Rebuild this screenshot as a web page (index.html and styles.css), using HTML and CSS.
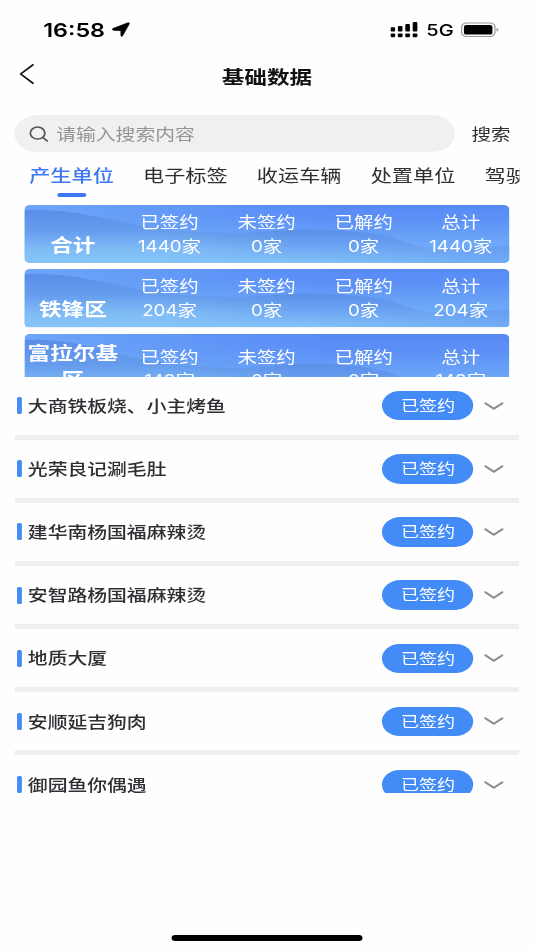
FILE: index.html
```html
<!DOCTYPE html>
<html lang="zh-CN">
<head>
<meta charset="utf-8">
<title>基础数据</title>
<link rel="stylesheet" href="styles.css">
</head>
<body>
<svg width="0" height="0" class="defs">
  <defs>
    <linearGradient id="w1" gradientUnits="userSpaceOnUse" x1="0" y1="4" x2="0" y2="58"><stop offset="0" stop-color="#5b8de8"/><stop offset=".4" stop-color="#669ced"/><stop offset=".75" stop-color="#80bcf6"/><stop offset="1" stop-color="#86c4f8"/></linearGradient>
    <linearGradient id="w2" gradientUnits="userSpaceOnUse" x1="0" y1="22" x2="0" y2="58"><stop offset="0" stop-color="#588ae6"/><stop offset=".5" stop-color="#6ca3f1"/><stop offset="1" stop-color="#84c2f8"/></linearGradient>
    <linearGradient id="mix" gradientUnits="userSpaceOnUse" x1="150" y1="0" x2="270" y2="0"><stop offset="0" stop-color="#fff" stop-opacity="0"/><stop offset="1" stop-color="#fff"/></linearGradient>
    <mask id="blend" maskUnits="userSpaceOnUse" x="0" y="0" width="485" height="58"><rect width="485" height="58" fill="url(#mix)"/></mask>
    <linearGradient id="fade" gradientUnits="userSpaceOnUse" x1="290" y1="0" x2="485" y2="0"><stop offset="0" stop-color="#5f95f2" stop-opacity="0"/><stop offset="1" stop-color="#5f95f2" stop-opacity=".5"/></linearGradient>
    <linearGradient id="left" gradientUnits="userSpaceOnUse" x1="0" y1="0" x2="300" y2="0"><stop offset="0" stop-color="#74b0f9" stop-opacity=".75"/><stop offset="1" stop-color="#6fa9f9" stop-opacity="0"/></linearGradient>
    <linearGradient id="tip" gradientUnits="userSpaceOnUse" x1="0" y1="0" x2="0" y2="45"><stop offset="0" stop-color="#588af6"/><stop offset=".3" stop-color="#5c90f6"/><stop offset="1" stop-color="#73aff9"/></linearGradient>
    <symbol id="waves" viewBox="0 0 485 58" preserveAspectRatio="none">
      <rect width="485" height="58" fill="url(#tip)"/>
      <rect width="485" height="58" fill="url(#left)"/>
      <path d="M0 5C45 3 75 13 118 21C155 27 190 28 230 28L300 26V58H0Z" fill="url(#w1)"/>
      <g mask="url(#blend)"><path d="M118 21C155 27 190 28 218 28C250 26 270 24 305 25C345 26 365 31 382 37C397 44 420 45 485 40V58H118Z" fill="url(#w2)"/></g>
      <path d="M250 26C270 24 285 24 305 25C345 26 365 31 382 37C397 44 420 45 485 40V58H250Z" fill="url(#fade)"/>
    </symbol>
    <symbol id="down" viewBox="0 0 16 10"><path d="M1 2.2L8 7.8L15 2.2" fill="none" stroke="#8b8d92" stroke-width="1.9" stroke-linecap="round" stroke-linejoin="round"/></symbol>
  </defs>
</svg>
<div class="phone">
  <header class="status">
    <span class="time">16:58</span>
    <svg class="arrow" viewBox="0 0 16 16"><path d="M.9 7L14 .9Q15.8.4 15.1 2.2L9.4 14.7Q8.3 16.3 7.9 14.5V9.2L1.3 8.7Q-.6 8 .9 7Z" stroke="#000" stroke-width=".7"/></svg>
    <svg class="signal" viewBox="0 0 23 16"><g><rect x="0" y="5.2" width="3.8" height="4.2" rx=".9"/><rect x="6.1" y="4" width="3.8" height="5.4" rx=".9"/><rect x="12.2" y="2" width="3.8" height="7.4" rx=".9"/><rect x="18.3" y="0" width="3.8" height="9.4" rx=".9"/><rect x="0" y="11.4" width="3.8" height="3.8" rx=".9"/><rect x="6.1" y="11.4" width="3.8" height="3.8" rx=".9"/><rect x="12.2" y="11.4" width="3.8" height="3.8" rx=".9"/><rect x="18.3" y="11.4" width="3.8" height="3.8" rx=".9"/></g></svg>
    <span class="net">5G</span>
    <svg class="battery" viewBox="0 0 31 16"><rect x=".5" y="1" width="27.4" height="13.6" rx="4" fill="none" stroke="#999"/><rect x="2.4" y="3" width="23.4" height="9.6" rx="2.2"/><path d="M29.2 5.8Q30.8 6.6 30.8 7.8T29.2 9.8Z" fill="#999"/></svg>
  </header>
  <nav class="navbar">
    <svg class="back" viewBox="0 0 12 20"><path d="M11 .8L1 10L11 19.2" fill="none" stroke="#111" stroke-width="1.6" stroke-linecap="round" stroke-linejoin="round"/></svg>
    <h1>基础数据</h1>
  </nav>
  <div class="search">
    <div class="field">
      <svg viewBox="0 0 16 16"><circle cx="6.9" cy="7.1" r="6" fill="none" stroke="#55575b" stroke-width="1.5"/><path d="M11.3 11.6L14.9 15" stroke="#55575b" stroke-width="1.6" stroke-linecap="round"/></svg>
      <span>请输入搜索内容</span>
    </div>
    <span class="go">搜索</span>
  </div>
  <div class="tabs"><span class="on">产生单位</span><span>电子标签</span><span>收运车辆</span><span>处置单位</span><span>驾驶人员</span></div>
  <section class="cards">
    <div class="card"><svg><use href="#waves"/></svg><b>合计</b><p>已签约<br><i>1440</i>家</p><p>未签约<br><i>0</i>家</p><p>已解约<br><i>0</i>家</p><p>总计<br><i>1440</i>家</p></div>
    <div class="card"><svg><use href="#waves"/></svg><b>铁锋区</b><p>已签约<br><i>204</i>家</p><p>未签约<br><i>0</i>家</p><p>已解约<br><i>0</i>家</p><p>总计<br><i>204</i>家</p></div>
    <div class="card tall"><svg><use href="#waves"/></svg><b>富拉尔基区</b><p>已签约<br><i>148</i>家</p><p>未签约<br><i>0</i>家</p><p>已解约<br><i>0</i>家</p><p>总计<br><i>148</i>家</p></div>
  </section>
  <section class="list">
    <div class="row"><span class="name">大商铁板烧、小主烤鱼</span><span class="pill">已签约</span><svg><use href="#down"/></svg></div>
    <div class="row"><span class="name">光荣良记涮毛肚</span><span class="pill">已签约</span><svg><use href="#down"/></svg></div>
    <div class="row"><span class="name">建华南杨国福麻辣烫</span><span class="pill">已签约</span><svg><use href="#down"/></svg></div>
    <div class="row"><span class="name">安智路杨国福麻辣烫</span><span class="pill">已签约</span><svg><use href="#down"/></svg></div>
    <div class="row"><span class="name">地质大厦</span><span class="pill">已签约</span><svg><use href="#down"/></svg></div>
    <div class="row"><span class="name">安顺延吉狗肉</span><span class="pill">已签约</span><svg><use href="#down"/></svg></div>
    <div class="row"><span class="name">御园鱼你偶遇</span><span class="pill">已签约</span><svg><use href="#down"/></svg></div>
  </section>
  <div class="home"></div>
</div>
</body>
</html>
```
FILE: styles.css
```css
* { box-sizing: border-box; }
body { margin: 0; background: #fefefe; overflow: hidden; }
.defs { position: absolute; }
svg { display: block; flex: none; }

.phone {
  width: 439px;
  height: 950px;
  transform: scaleX(1.2164);
  transform-origin: 0 0;
  display: flex;
  flex-direction: column;
  overflow: hidden;
  font-family: "Noto Sans CJK SC", sans-serif;
  font-size: 16.3px;
  color: #2d2f33;
}

.status { height: 52px; padding: 7px 29.5px 0 35.5px; display: flex; align-items: center; font-family: Inter, sans-serif; color: #000; }
.time { width: 52px; font-size: 19.2px; font-weight: 600; line-height: 24px; white-space: nowrap; }
.arrow { width: 15px; height: 15px; margin-left: 4.5px; }
.signal { width: 23px; height: 16px; margin-left: auto; }
.net { margin-left: 7px; width: 21px; font-size: 16.5px; font-weight: 500; line-height: 24px; }
.battery { width: 31px; height: 16px; margin-left: 7px; }

.navbar { height: 63px; display: flex; align-items: center; padding: 0 16.4px 12px; }
.back { width: 12px; height: 20px; margin-top: -7px; }
h1 { flex: 1; margin: -4px 12px 0 0; text-align: center; font-size: 18.6px; line-height: 28px; font-weight: 600; color: #111; }

.search { height: 37px; display: flex; align-items: center; padding-left: 12.3px; }
.field { width: 362px; height: 37px; border-radius: 18.5px; background: #f0f0f0; display: flex; align-items: center; padding-left: 11.3px; color: #929498; }
.field svg { width: 16px; height: 16px; margin-right: 6.6px; }
.field span, .go { margin-top: -2px; }
.go { margin-left: 13.4px; font-size: 16px; }

.tabs { height: 53px; width: 402.8px; margin-left: 24px; display: flex; gap: 24px; overflow: hidden; font-size: 17.4px; line-height: 26px; padding-top: 10px; white-space: nowrap; }
.tabs span { flex: none; }
.tabs .on { color: #3c78f6; font-weight: 500; }
.tabs .on::after { content: ""; display: block; width: 23.5px; height: 3.6px; margin: 5px auto 0; border-radius: 2px; background: #3c78f6; }

.cards { height: 171.6px; width: 399px; margin-left: 20px; overflow: hidden; display: flex; flex-direction: column; gap: 6px; }
.card { position: relative; flex: none; height: 58.3px; border-radius: 5px; overflow: hidden; display: grid; grid-template-columns: repeat(5, 1fr); align-items: center; text-align: center; color: #fff; font-size: 16px; line-height: 23.5px; }
.card svg { position: absolute; inset: 0; width: 100%; height: 100%; }
.card b, .card p { position: relative; margin: 0; }
.card b { align-self: start; padding-top: 26px; font-size: 18.6px; line-height: 26px; font-weight: 600; }
.card p { font-weight: 400; left: -.3px; }
.card i { font-family: Inter, sans-serif; font-style: normal; font-size: 15.4px; font-weight: 400; }
.tall { height: 70.5px; }
.tall b { padding-top: 5px; }

.list { height: 416.4px; margin: 0 12.3px; overflow: hidden; }
.row { height: 63.15px; border-bottom: 5.7px solid #efefef; display: flex; align-items: center; padding: 0 12.5px 0 1.7px; }
.row::before { content: ""; width: 3.6px; height: 17px; border-radius: 1.5px; background: #438cf7; margin-right: 5.3px; }
.name { flex: 1; font-weight: 500; margin-top: -1.6px; }
.pill { width: 75px; height: 29.4px; border-radius: 15px; background: #438cf7; color: #fff; font-size: 14.9px; font-weight: 400; line-height: 28.6px; text-align: center; margin-right: 8.8px; }
.row svg { width: 16px; height: 10px; }

.home { width: 156.5px; height: 5.6px; border-radius: 3px; background: #000; margin: 142px auto 0; }
```
